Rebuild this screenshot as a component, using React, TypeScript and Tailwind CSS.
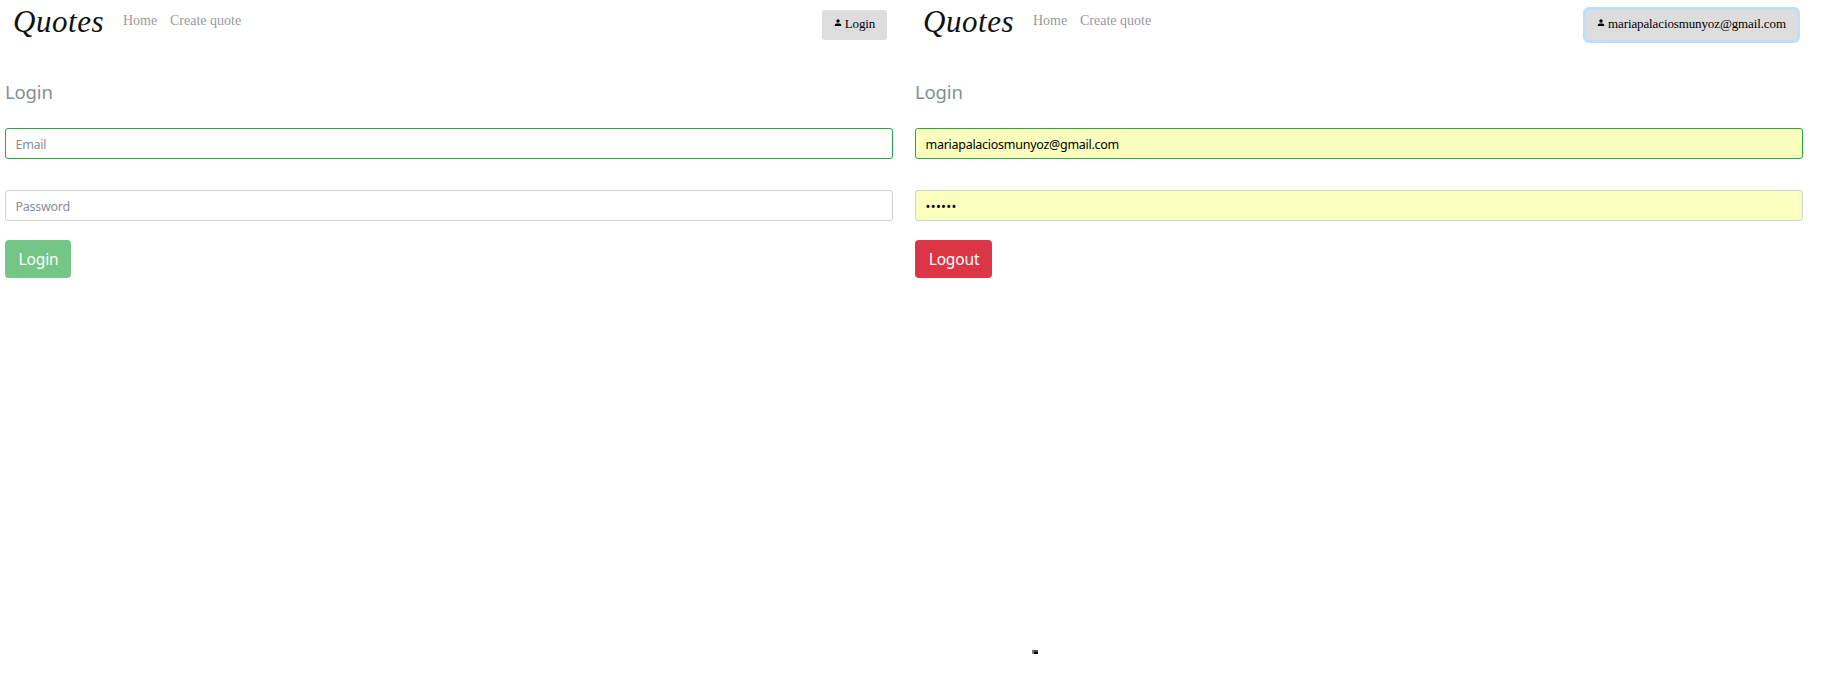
type PanelProps = {
  account: string;
  email?: string;
  password?: string;
  signedIn?: boolean;
};

function PersonIcon() {
  return (
    <svg width="8" height="8" viewBox="0 0 8 8" className="mt-[8px] mr-[3px] shrink-0" fill="#000">
      <circle cx="4" cy="3" r="1.7" />
      <path d="M0.8 8V7.1C0.8 5.8 2.2 5.4 4 5.4S7.2 5.8 7.2 7.1V8Z" />
    </svg>
  );
}

function Panel({ account, email, password, signedIn = false }: PanelProps) {
  const fill = signedIn ? "bg-[#faffbd]" : "bg-white";
  return (
    <section className="w-[910px] pr-[17px] pl-[5px]">
      <nav className="flex h-[50px] items-start pr-[6px] pl-[8px] font-['Liberation_Serif',serif]">
        <a className="mt-[1px] w-[110px] text-[31px] leading-[41px] tracking-[0.55px] text-[#111111] italic">Quotes</a>
        <a className="mt-[10px] w-[47px] text-[14px] leading-[21px] text-[#999999]">Home</a>
        <a className="mt-[10px] text-[14px] leading-[21px] text-[#999999]">Create quote</a>
        <button
          className={
            "mt-[10px] ml-auto flex h-[30px] items-start justify-center rounded-[3px] bg-[#dddddd] text-[13px] leading-[27px] tracking-[-0.12px] text-black " +
            (signedIn ? "w-[211px] shadow-[0_0_0_3px_#bfdeff]" : "w-[65px]")
          }
        >
          <PersonIcon />
          {account}
        </button>
      </nav>
      <form className="flex flex-col items-start font-['Noto_Sans',sans-serif]">
        <h1 className="mt-[30px] text-[18.5px] leading-[24px] tracking-[-0.15px] text-[#868e96]">Login</h1>
        <input
          defaultValue={email}
          placeholder="Email"
          className={"mt-[24px] h-[31px] w-full rounded-[3px] border border-[#28a745] pt-px pr-[9px] pl-[9.5px] text-[12.5px] tracking-[-0.27px] text-black outline-none placeholder:text-[#868e96] " + fill}
        />
        <input
          type="password"
          defaultValue={password}
          placeholder="Password"
          className={
            "mt-[31px] h-[31px] w-full rounded-[3px] border border-[#ced4da] pt-px pr-[9px] pl-[9.5px] text-black outline-none placeholder:text-[#868e96] " +
            (signedIn ? "text-[13px] tracking-[0.3px] " : "text-[12.5px] tracking-[-0.27px] ") +
            fill
          }
        />
        <button
          type="button"
          className={
            "mt-[19px] h-[38px] rounded-[4px] pl-px text-[15.5px] leading-[38px] tracking-[-0.15px] text-white " +
            (signedIn ? "w-[77px] bg-[#dc3545]" : "w-[66px] bg-[#74c686]")
          }
        >
          {signedIn ? "Logout" : "Login"}
        </button>
      </form>
    </section>
  );
}

export default function App() {
  return (
    <main className="relative flex h-[686px] w-[1821px] overflow-hidden bg-white">
      <Panel account="Login" />
      <Panel account="mariapalaciosmunyoz@gmail.com" email="mariapalaciosmunyoz@gmail.com" password="quotes" signedIn />
      <div className="absolute top-[650px] left-[1032px] grid grid-cols-3">
        <i className="h-[2px] w-[2px] bg-[#777777]" />
        <i className="h-[2px] w-[2px] bg-[#444444]" />
        <i className="h-[2px] w-[2px] bg-[#555555]" />
        <i className="h-[2px] w-[2px] bg-[#888888]" />
        <i className="h-[2px] w-[2px] bg-black" />
        <i className="h-[2px] w-[2px] bg-black" />
      </div>
    </main>
  );
}
